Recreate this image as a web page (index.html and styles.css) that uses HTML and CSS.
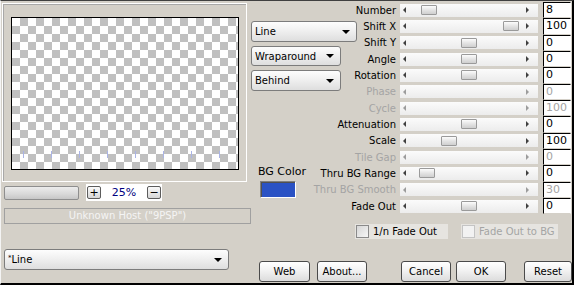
FILE: index.html
```html
<!DOCTYPE html>
<html lang="en">
<head>
    <meta charset="UTF-8">
    <title>Tile Settings</title>
    <link rel="stylesheet" href="styles.css">
</head>
<body>
    <div class="dialog">
        <div class="main">
            <div class="preview-col">
                <div class="group">
                    <div class="canvas">
                        <span class="tick"></span><span class="tick"></span><span class="tick"></span><span class="tick"></span>
                        <span class="tick"></span><span class="tick"></span><span class="tick"></span><span class="tick"></span>
                    </div>
                </div>
                <div class="zoom-row">
                    <div class="zoom-bar"></div>
                    <div class="zoom-box">
                        <span class="mini">+</span>
                        <span class="zoom-value">25%</span>
                        <span class="mini">&minus;</span>
                    </div>
                </div>
                <div class="status">Unknown Host ("9PSP")</div>
            </div>

            <div class="mode-col">
                <div class="select select-line">Line<span class="caret"></span></div>
                <div class="select select-short select-wrap">Wraparound<span class="caret"></span></div>
                <div class="select select-short">Behind<span class="caret"></span></div>
                <div class="bg-label">BG Color</div>
                <div class="swatch"></div>
            </div>

            <div class="params-col">
                <div class="params">
                    <div class="param">
                        <span class="p-label">Number</span>
                        <div class="track"><span class="arrow-l"></span><span class="thumb" style="--pos: 15px"></span><span class="arrow-r"></span></div>
                        <span class="field">8</span>
                    </div>
                    <div class="param">
                        <span class="p-label">Shift X</span>
                        <div class="track"><span class="arrow-l"></span><span class="thumb" style="--pos: 97px"></span><span class="arrow-r"></span></div>
                        <span class="field">100</span>
                    </div>
                    <div class="param">
                        <span class="p-label">Shift Y</span>
                        <div class="track"><span class="arrow-l"></span><span class="thumb" style="--pos: 55px"></span><span class="arrow-r"></span></div>
                        <span class="field">0</span>
                    </div>
                    <div class="param">
                        <span class="p-label">Angle</span>
                        <div class="track"><span class="arrow-l"></span><span class="thumb" style="--pos: 55px"></span><span class="arrow-r"></span></div>
                        <span class="field">0</span>
                    </div>
                    <div class="param">
                        <span class="p-label">Rotation</span>
                        <div class="track"><span class="arrow-l"></span><span class="thumb" style="--pos: 55px"></span><span class="arrow-r"></span></div>
                        <span class="field">0</span>
                    </div>
                    <div class="param off">
                        <span class="p-label">Phase</span>
                        <div class="track"><span class="arrow-l"></span><span class="arrow-r"></span></div>
                        <span class="field">0</span>
                    </div>
                    <div class="param off">
                        <span class="p-label">Cycle</span>
                        <div class="track"><span class="arrow-l"></span><span class="arrow-r"></span></div>
                        <span class="field">100</span>
                    </div>
                    <div class="param">
                        <span class="p-label">Attenuation</span>
                        <div class="track"><span class="arrow-l"></span><span class="thumb" style="--pos: 55px"></span><span class="arrow-r"></span></div>
                        <span class="field">0</span>
                    </div>
                    <div class="param">
                        <span class="p-label">Scale</span>
                        <div class="track"><span class="arrow-l"></span><span class="thumb" style="--pos: 35px"></span><span class="arrow-r"></span></div>
                        <span class="field">100</span>
                    </div>
                    <div class="param off">
                        <span class="p-label">Tile Gap</span>
                        <div class="track"><span class="arrow-l"></span><span class="arrow-r"></span></div>
                        <span class="field">0</span>
                    </div>
                    <div class="param">
                        <span class="p-label">Thru BG Range</span>
                        <div class="track"><span class="arrow-l"></span><span class="thumb" style="--pos: 13px"></span><span class="arrow-r"></span></div>
                        <span class="field">0</span>
                    </div>
                    <div class="param off">
                        <span class="p-label">Thru BG Smooth</span>
                        <div class="track"><span class="arrow-l"></span><span class="arrow-r"></span></div>
                        <span class="field">30</span>
                    </div>
                    <div class="param">
                        <span class="p-label">Fade Out</span>
                        <div class="track"><span class="arrow-l"></span><span class="thumb" style="--pos: 55px"></span><span class="arrow-r"></span></div>
                        <span class="field">0</span>
                    </div>
                </div>

                <div class="checks">
                    <label class="check"><span class="box"></span>1/n Fade Out</label>
                    <label class="check check-off"><span class="box"></span>Fade Out to BG</label>
                </div>
            </div>
        </div>

        <div class="footer">
            <div class="select select-preset"><span class="star">*</span>Line<span class="caret"></span></div>
            <button class="btn btn-web">Web</button>
            <button class="btn btn-about">About...</button>
            <button class="btn btn-cancel">Cancel</button>
            <button class="btn btn-ok">OK</button>
            <button class="btn btn-reset">Reset</button>
        </div>
    </div>
</body>
</html>
```

FILE: styles.css
```css
:root {
    --face: #d4d0c8;
    --shadow: #808080;
    --disabled: #a4a4a4;
    --check-a: #c0c0c0;
    --check-b: #ffffff;
}

* {
    box-sizing: border-box;
}

body {
    margin: 0;
    background: var(--face);
    font-family: "DejaVu Sans", "Liberation Sans", sans-serif;
    font-size: 10px;
    color: #000;
}

.dialog {
    width: 574px;
    height: 285px;
    background: var(--face);
    border-top: 1px solid #404040;
    border-left: 1px solid #f4f4f4;
    border-right: 2px solid #000;
    border-bottom: 2px solid #000;
}

.main {
    display: flex;
    height: 248px;
}

/* preview column */
.preview-col {
    width: 250px;
    flex-shrink: 0;
}

.group {
    width: 245px;
    height: 179px;
    margin: 2px 0 0 1px;
    border: 1px solid #fff;
    box-shadow: inset 1px 1px 0 #a8a8a8;
}

.canvas {
    width: 228px;
    height: 153px;
    margin: 13px 0 0 8px;
    border: 1px solid #000;
    background: conic-gradient(var(--check-a) 25%, var(--check-b) 0 50%, var(--check-a) 0 75%, var(--check-b) 0);
    background-size: 16px 16px;
    display: flex;
    align-items: flex-end;
    gap: 27px;
    padding: 0 0 11px 11px;
}

.tick {
    width: 1px;
    height: 7px;
    background: #aab4e6;
}

.zoom-row {
    display: flex;
    align-items: center;
    height: 17px;
    margin-top: 2px;
}

.zoom-bar {
    width: 75px;
    height: 14px;
    margin-left: 3px;
    border: 1px solid #8e8e8e;
    border-radius: 2px;
    background: linear-gradient(#ececec, #d8d8d8 60%, #c6c6c6);
}

.zoom-box {
    width: 76px;
    height: 17px;
    margin-left: 7px;
    background: #fff;
    display: flex;
    align-items: center;
    justify-content: space-between;
    padding: 0 1px;
}

.mini {
    width: 14px;
    height: 13px;
    border: 1px solid #5c5c5c;
    border-radius: 2px;
    background: linear-gradient(#fafafa, #d6d6d6);
    display: flex;
    align-items: center;
    justify-content: center;
    font-size: 11px;
    line-height: 1;
}

.zoom-value {
    color: #000080;
    font-size: 11px;
}

.status {
    width: 247px;
    height: 16px;
    margin: 7px 0 0 3px;
    border: 1px solid #a0a0a0;
    color: #f4f4f4;
    text-align: center;
    line-height: 14px;
}

/* dropdowns */
.mode-col {
    width: 60px;
    flex-shrink: 0;
}

.select {
    display: flex;
    align-items: center;
    height: 21px;
    padding: 0 6px 0 3px;
    border: 1px solid #7c7c7c;
    border-radius: 3px;
    background: linear-gradient(#fdfdfd, #f0f0f0 45%, #dedede);
    white-space: nowrap;
}

.caret {
    margin-left: auto;
    border-left: 4px solid transparent;
    border-right: 4px solid transparent;
    border-top: 4px solid #000;
}

.star {
    font-size: 7px;
    align-self: flex-start;
    margin-top: 4px;
}

.select-line {
    width: 106px;
    margin-top: 20px;
}

.select-short {
    width: 90px;
    margin-top: 4px;
}

.select-wrap {
    height: 20px;
}

.bg-label {
    margin: 74px 0 0 7px;
    line-height: 13px;
    white-space: nowrap;
    font-size: 11px;
}

.swatch {
    width: 36px;
    height: 17px;
    margin: 3px 0 0 9px;
    background: #2a52c4;
    border: 1px solid;
    border-color: #808080 #fff #fff #808080;
    box-shadow: inset 1px 1px 0 #505050;
}

/* parameter sliders */
.params-col {
    flex: 1;
    padding-top: 1px;
}

.params {
    display: grid;
    grid-template-columns: 85px 138px 29px;
    grid-template-rows: repeat(13, 16.33px);
    column-gap: 4px;
}

.params .field {
    margin-left: 1px;
}

.param {
    display: contents;
}

.p-label {
    text-align: right;
    white-space: nowrap;
    align-self: center;
    line-height: 13px;
}

.track {
    display: flex;
    align-items: center;
    height: 13px;
    align-self: center;
    background: linear-gradient(#fbfbfb, #ececec);
}

.arrow-l {
    margin-left: 3px;
    border-top: 3px solid transparent;
    border-bottom: 3px solid transparent;
    border-right: 3px solid #404040;
}

.arrow-r {
    margin-left: auto;
    margin-right: 9px;
    border-top: 3px solid transparent;
    border-bottom: 3px solid transparent;
    border-left: 3px solid #404040;
}

.thumb {
    width: 16px;
    height: 10px;
    margin-left: var(--pos);
    border: 1px solid #9a9a9a;
    border-radius: 1px;
    background: linear-gradient(#fcfcfc, #e4e4e4 50%, #cfcfcf);
}

.field {
    background: #fff;
    border: 1px solid;
    border-color: #000 #fff var(--face) #000;
    padding-left: 2px;
    line-height: 14px;
    font-size: 11px;
}

.param.off .p-label,
.param.off .field {
    color: var(--disabled);
}

.param.off .arrow-l {
    border-right-color: #9c9c9c;
}

.param.off .arrow-r {
    border-left-color: #9c9c9c;
}

/* check boxes */
.checks {
    display: flex;
    margin: 10px 0 0 44px;
}

.check {
    display: flex;
    align-items: center;
    gap: 4px;
    height: 15px;
    width: 93px;
    padding-left: 1px;
    background: #e6e4e0;
    white-space: nowrap;
}

.check-off {
    width: 97px;
    margin-left: 13px;
    color: var(--disabled);
}

.box {
    width: 13px;
    height: 13px;
    border: 1px solid #8a8a8a;
    background: linear-gradient(135deg, #d6d6d6, #f6f6f6);
}

.check-off .box {
    border-color: #c4c4c4;
    background: #f2f2f2;
}

/* footer */
.footer {
    display: flex;
    align-items: flex-start;
    height: 34px;
}

.select-preset {
    width: 225px;
    margin-left: 3px;
}

.btn {
    height: 21px;
    margin-top: 12px;
    padding: 0;
    border: 1px solid #4a4a4a;
    border-radius: 3px;
    background: linear-gradient(#ffffff, #f2f2f2 45%, #dcdcdc);
    font-family: inherit;
    font-size: 10px;
    color: #000;
}

.btn-web {
    width: 51px;
    margin-left: 30px;
}

.btn-about {
    width: 50px;
    margin-left: 7px;
}

.btn-cancel {
    width: 50px;
    margin-left: 34px;
}

.btn-ok {
    width: 50px;
    margin-left: 5px;
}

.btn-reset {
    width: 48px;
    margin-left: 18px;
}
```
